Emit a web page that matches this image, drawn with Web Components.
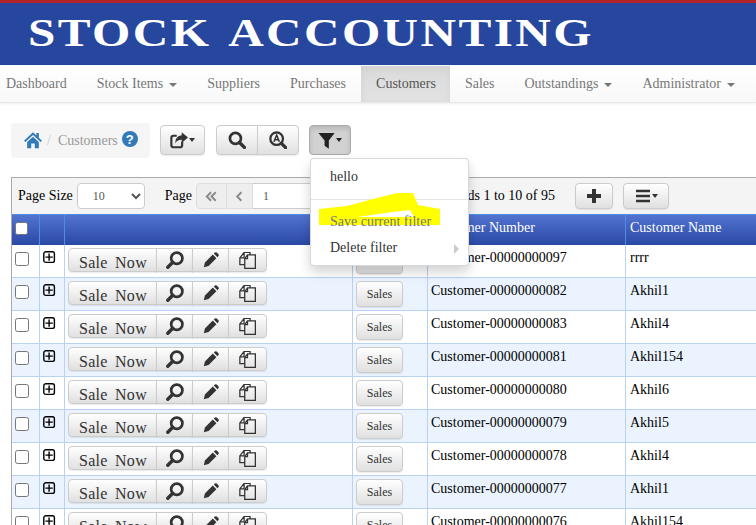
<!DOCTYPE html>
<html>
<head>
<meta charset="utf-8">
<title>Stock Accounting</title>
<style>
    html, body {
        margin: 0;
        height: 100%;
        overflow: hidden;
        background: #fff;
        font-family: "Liberation Serif", serif;
        font-size: 14px;
        color: #000;
    }
</style>
</head>
<body>
<app-header>STOCK ACCOUNTING</app-header>
<nav-bar>
    <nav-item>Dashboard</nav-item>
    <nav-item caret>Stock Items</nav-item>
    <nav-item>Suppliers</nav-item>
    <nav-item>Purchases</nav-item>
    <nav-item active>Customers</nav-item>
    <nav-item>Sales</nav-item>
    <nav-item caret>Outstandings</nav-item>
    <nav-item caret>Administrator</nav-item>
</nav-bar>
<page-tools></page-tools>
<data-grid></data-grid>

<script>
//icons, all hand drawn on a 16 box
const icons = {
    search: '<circle cx="6.6" cy="6.6" r="4.9" fill="none" stroke="currentColor" stroke-width="2.4"/><path d="M10.2 10.2L14.6 14.6" stroke="currentColor" stroke-width="3" stroke-linecap="round"/>',
    searchLeft: '<circle cx="9.6" cy="6.4" r="5" fill="none" stroke="currentColor" stroke-width="2.4"/><path d="M6 10L1.6 14.4" stroke="currentColor" stroke-width="3" stroke-linecap="round"/>',
    searchA: '<circle cx="6.8" cy="6.8" r="5.6" fill="none" stroke="currentColor" stroke-width="2"/><path d="M4.4 9.6L6.8 3.6L9.2 9.6M5.2 7.8H8.4" fill="none" stroke="currentColor" stroke-width="1.4"/><path d="M11 11L14.8 14.8" stroke="currentColor" stroke-width="3" stroke-linecap="round"/>',
    pencil: '<path d="M.8 15.2L1.9 10.4L9.8 2.6L13.4 6.2L5.6 14.1Z M10.8 1.6L11.9 .5Q12.8 -.1 13.7 .5L15.5 2.3Q16.1 3.2 15.5 4.1L14.4 5.2Z" fill="currentColor"/>',
    copy: '<path d="M5.4 6.2L8 2.8H15.4V15.4H5.4Z M8 2.8V6.2H5.4" fill="none" stroke="currentColor" stroke-width="1.2"/><path d="M10.4 2.8V.4H4.8L.8 5.6V11.8H5.4 M4.8 .4V5.6H.8" fill="none" stroke="currentColor" stroke-width="1.2"/>',
    filter: '<path d="M.4 1H15.6L10.2 8V15.8L6.2 13V8Z" fill="currentColor"/>',
    share: '<path d="M10.8 9.6V12.6Q10.8 14.4 9 14.4H3.2Q1.2 14.4 1.2 12.4V6.2Q1.2 4.2 3.2 4.2H6" fill="none" stroke="currentColor" stroke-width="1.9"/><path d="M10.4 1L16 5.8L10.4 10.6V7.8Q6.4 7.6 4.6 11Q4.6 4.6 10.4 3.8Z" fill="currentColor"/>',
    plus: '<path d="M8 1V15M1 8H15" stroke="currentColor" stroke-width="4"/>',
    bars: '<path d="M1 3H15M1 8H15M1 13H15" stroke="currentColor" stroke-width="2.4"/>',
    home: '<path d="M8 1.2L0 8.6L1.2 9.8L8 3.6L14.8 9.8L16 8.6L13.2 6V1.8H11V4Z" fill="currentColor"/><path d="M2.8 9.8L8 5L13.2 9.8V15.4H9.6V11H6.4V15.4H2.8Z" fill="currentColor"/>',
    first: '<path d="M7.5 3.5L3 8L7.5 12.5M12.5 3.5L8 8L12.5 12.5" fill="none" stroke="currentColor" stroke-width="2"/>',
    prev: '<path d="M10 3.5L5.5 8L10 12.5" fill="none" stroke="currentColor" stroke-width="2"/>',
    expand: '<rect x=".8" y=".8" width="10.6" height="10.6" rx="2" fill="none" stroke="currentColor" stroke-width="1.4"/><path d="M6.1 2.4V9.8M2.4 6.1H9.8" stroke="currentColor" stroke-width="1.4"/>'
};

function icon(name, size) {
    return `<svg width="${size}" height="${size}" viewBox="0 0 16 16" aria-hidden="true">${icons[name]}</svg>`;
}

const buttonCss = `
    .btn {
        /*position*/
        display: inline-flex;
        align-items: center;
        justify-content: center;
        box-sizing: border-box;
        height: 30px;

        /*border*/
        border: 1px solid #ccc;
        border-radius: 4px;
        background: linear-gradient(#fff, #e0e0e0);
        box-shadow: 0 1px 1px rgba(0,0,0,.08);

        /*text*/
        color: #333;
        font-family: "Liberation Serif", serif;
    }
    .group { display: inline-flex; }
    .group .btn { border-radius: 0; margin-left: -1px; }
    .group .btn:first-child { border-radius: 4px 0 0 4px; margin-left: 0; }
    .group .btn:last-child { border-radius: 0 4px 4px 0; }
    .caret {
        display: inline-block;
        width: 0;
        height: 0;
        margin-left: 1px;
        border-top: 4px solid currentColor;
        border-left: 3.5px solid transparent;
        border-right: 3.5px solid transparent;
    }
`;

class AppHeader extends HTMLElement {
    constructor() {
        super();
        this.attachShadow({mode: 'open'});
        this.shadowRoot.innerHTML = `
        <style>
            :host {
                display: block;
                box-sizing: border-box;
                height: 65px;
                padding: 4px 0 0 28px;
                background: #27479f;
                border-top: 3px solid #b4232a;
                color: #fff;
                font: bold 41px/50px "Liberation Serif", serif;
                white-space: nowrap;
            }
            /*the logo lettering is wider than the font*/
            .wide {
                display: inline-block;
                letter-spacing: 2px;
                word-spacing: 4px;
                transform: scaleX(1.2);
                transform-origin: left center;
            }
        </style>
        <span class="wide"><slot></slot></span>`;
    }
}
customElements.define('app-header', AppHeader);

class NavBar extends HTMLElement {
    constructor() {
        super();
        this.attachShadow({mode: 'open'});
        this.shadowRoot.innerHTML = `
        <style>
            :host {
                display: flex;
                box-sizing: border-box;
                height: 37px;
                margin-top: 1px;
                padding-left: 0;
                background: linear-gradient(#fff, #f8f8f8);
                border-bottom: 1px solid #e7e7e7;
                box-shadow: 0 1px 3px rgba(0,0,0,.08);
            }
            .inner { display: flex; margin-left: -9px; }
        </style>
        <div class="inner"><slot></slot></div>`;
    }
}
customElements.define('nav-bar', NavBar);

class NavItem extends HTMLElement {
    constructor() {
        super();
        this.attachShadow({mode: 'open'});
        const caret = this.hasAttribute('caret') ? '<span class="caret"></span>' : '';
        this.shadowRoot.innerHTML = `
        <style>
            :host {
                display: flex;
                align-items: center;
                padding: 0 15px;
                color: #777;
                font-size: 14px;
                white-space: nowrap;
            }
            :host([active]) {
                padding-right: 14px;
                color: #555;
                background: linear-gradient(#dbdbdb, #e2e2e2);
                box-shadow: inset 0 3px 9px rgba(0,0,0,.05);
            }
            .caret {
                margin-left: 6px;
                margin-top: 2px;
                border-top: 4px solid #777;
                border-left: 4px solid transparent;
                border-right: 4px solid transparent;
            }
        </style>
        <slot></slot>${caret}`;
    }
}
customElements.define('nav-item', NavItem);

const toolsTemplate = document.createElement('template');
toolsTemplate.innerHTML = `
<style>
    ${buttonCss}
    :host {
        display: flex;
        align-items: flex-start;
        position: relative;
        height: 35px;
        margin: 20px 0 19px 11px;
    }
    .crumb {
        display: flex;
        align-items: center;
        box-sizing: border-box;
        width: 139px;
        height: 35px;
        padding-left: 13px;
        margin-right: 10px;
        background: #f5f5f5;
        border-radius: 4px;
        color: #999;
    }
    .crumb svg { color: #337ab7; margin-top: -2px; }
    .sep { color: #ccc; margin: 0 7px 0 5px; }
    .help {
        display: inline-flex;
        align-items: center;
        justify-content: center;
        width: 16px;
        height: 16px;
        margin: -3px 0 0 4px;
        border-radius: 50%;
        background: #337ab7;
        color: #fff;
        font: bold 13px "Liberation Sans", sans-serif;
    }
    .btns { display: flex; margin-top: 2px; }
    .share { width: 45px; margin-right: 11px; }
    .find { width: 42px; }
    .active {
        width: 42px;
        margin-left: 10px;
        background: #d2d2d2;
        border-color: #aaa;
        box-shadow: inset 0 3px 5px rgba(0,0,0,.125);
        color: #222;
    }
</style>
<div class="crumb">${icon('home', 18)}<span class="sep">/</span><span>Customers</span><span class="help">?</span></div>
<div class="btns">
    <span class="btn share">${icon('share', 18)}<span class="caret"></span></span>
    <span class="group">
        <span class="btn find">${icon('search', 18)}</span>
        <span class="btn find">${icon('searchA', 18)}</span>
    </span>
    <span class="btn active">${icon('filter', 17)}<span class="caret"></span></span>
</div>
<filter-menu></filter-menu>`;

class PageTools extends HTMLElement {
    constructor() {
        super();
        this.attachShadow({mode: 'open'});
        this.shadowRoot.appendChild(toolsTemplate.content.cloneNode(true));
    }
}

class FilterMenu extends HTMLElement {
    constructor() {
        super();
        this.attachShadow({mode: 'open'});
        this.shadowRoot.innerHTML = `
        <style>
            :host {
                /*over the grid, hangs from the filter button*/
                position: absolute;
                left: 299px;
                top: 35px;
                z-index: 10;
                display: block;
                box-sizing: border-box;
                width: 159px;
                height: 108px;
                padding: 5px 0;
                background: #fff;
                border: 1px solid rgba(0,0,0,.15);
                border-radius: 4px;
                box-shadow: 0 6px 12px rgba(0,0,0,.175);
                font-size: 14px;
                color: #333;
            }
            .item {
                position: relative;
                height: 26px;
                line-height: 26px;
                padding-left: 19px;
            }
            .divider { height: 1px; margin: 9px 0; background: #e5e5e5; }
            .off { color: #777; }
            .mark { position: absolute; left: -1px; top: -1px; }
            .arrow {
                position: absolute;
                right: 9px;
                top: 9px;
                border-left: 5px solid #ccc;
                border-top: 5px solid transparent;
                border-bottom: 5px solid transparent;
            }
        </style>
        <div class="item">hello</div>
        <div class="divider"></div>
        <svg class="mark" width="159" height="108" viewBox="310 158 159 108">
            <path fill-rule="evenodd" fill="#ffff00" d="M319 209L347 206L373 199L397 193L413 193L418 205L440 209V225H319Z M357 217L393 212L410 210L414 217Z"/>
        </svg>
        <div class="item off">Save current filter</div>
        <div class="item">Delete filter<span class="arrow"></span></div>`;
    }
}
customElements.define('filter-menu', FilterMenu);
customElements.define('page-tools', PageTools);

const gridTemplate = document.createElement('template');
gridTemplate.innerHTML = `
<style>
    ${buttonCss}
    :host {
        display: block;
        margin-left: 11px;
        border-top: 1px solid #aaa;
        border-left: 1px solid #aaa;
    }
    .bar {
        display: flex;
        align-items: center;
        box-sizing: border-box;
        height: 36px;
        padding: 0 87px 0 6px;
        background: #f4f4f4;
        font-size: 14px;
    }
    select {
        box-sizing: border-box;
        width: 68px;
        height: 26px;
        margin: 0 20px 0 4px;
        padding: 0 0 0 11px;
        background: #fff;
        border: 1px solid #ccc;
        border-radius: 4px;
        color: #555;
        font: 12px "Liberation Serif", serif;
    }
    .pager { display: flex; height: 26px; margin-left: 4px; }
    .pager span {
        display: flex;
        align-items: center;
        justify-content: center;
        box-sizing: border-box;
        background: #eee;
        border: 1px solid #ddd;
        color: #888;
    }
    .pager span:first-child { width: 31px; border-radius: 4px 0 0 4px; }
    .pager span:nth-child(2) { width: 26px; border-left: 0; }
    .pager input {
        box-sizing: border-box;
        width: 100px;
        padding: 0 0 0 10px;
        border: 1px solid #ccc;
        border-left: 0;
        outline: 0;
        color: #555;
        font: 12px "Liberation Serif", serif;
    }
    .records { margin-left: auto; margin-right: 20px; }
    .bar .btn { height: 26px; }
    .add { width: 38px; margin-right: 10px; }
    .list { width: 46px; }
    .head {
        display: grid;
        grid-template-columns: 28px 25px 288px 75px 198px 1fr;
        box-sizing: border-box;
        height: 31px;
        background: linear-gradient(#5273d0, #2a49a5);
        border-top: 1px solid #4a8fe0;
        color: #fff;
        font-size: 14px;
    }
    .head div {
        box-sizing: border-box;
        padding: 5px 3px;
        border-right: 1px solid #4a8fe0;
        white-space: nowrap;
    }
    .head div:last-child { border-right: 0; padding-left: 4px; }
    .head input {
        appearance: none;
        display: block;
        box-sizing: border-box;
        margin: 2px 0 0 0;
        width: 13px;
        height: 13px;
        background: #fff;
        border: 1px solid #767676;
        border-radius: 2.5px;
    }
</style>
<div class="bar">
    <span>Page Size</span>
    <select><option>10</option></select>
    <span>Page</span>
    <div class="pager">
        <span>${icon('first', 15)}</span>
        <span>${icon('prev', 15)}</span>
        <input value="1">
    </div>
    <span class="records">Records 1 to 10 of 95</span>
    <span class="btn add">${icon('plus', 16)}</span>
    <span class="btn list">${icon('bars', 16)}<span class="caret"></span></span>
</div>
<div class="head">
    <div><input type="checkbox"></div>
    <div></div>
    <div></div>
    <div></div>
    <div>Customer Number</div>
    <div>Customer Name</div>
</div>
<div class="rows"></div>`;

const customers = [
    ['97', 'rrrr'],
    ['82', 'Akhil1'],
    ['83', 'Akhil4'],
    ['81', 'Akhil154'],
    ['80', 'Akhil6'],
    ['79', 'Akhil5'],
    ['78', 'Akhil4'],
    ['77', 'Akhil1'],
    ['76', 'Akhil154']
];

class DataGrid extends HTMLElement {
    constructor() {
        super();
        this.attachShadow({mode: 'open'});
        this.shadowRoot.appendChild(gridTemplate.content.cloneNode(true));
        const rows = this.shadowRoot.querySelector('.rows');
        customers.forEach((c, i) => {
            const row = document.createElement('grid-row');
            row.setAttribute('number', 'Customer-000000000' + c[0]);
            row.setAttribute('name', c[1]);
            if (i % 2) row.setAttribute('alt', '');
            rows.appendChild(row);
        });
    }
}

const rowTemplate = document.createElement('template');
rowTemplate.innerHTML = `
<style>
    ${buttonCss}
    :host {
        display: grid;
        grid-template-columns: 28px 25px 288px 75px 198px 1fr;
        height: 33px;
        box-sizing: border-box;
        background: #fff;
        border-bottom: 1px solid #b9d1f2;
        font-size: 14px;
    }
    :host([alt]) { background: #eaf3fe; }
    .cell {
        box-sizing: border-box;
        padding: 3px;
        border-right: 1px solid #b9d1f2;
        white-space: nowrap;
    }
    .cell:last-child { border-right: 0; padding-left: 4px; }
    .cell input {
        appearance: none;
        display: block;
        box-sizing: border-box;
        margin: 4px 0 0 0;
        width: 14px;
        height: 14px;
        background: #fff;
        border: 1px solid #767676;
        border-radius: 2.5px;
    }
    .expand { padding: 6px 0 0 3px; color: #000; }
    .expand svg { display: block; }
    .actions { padding: 3px 0 0 3px; }
    .actions .btn { height: 24px; width: 37px; color: #333; }
    .actions .btn:first-child { width: 89px; padding: 5px 0 0 1px; font-size: 16px; word-spacing: 3px; letter-spacing: .3px; }
    .actions .btn:last-child { width: 39px; }
    .sales { padding: 3px 0 0 3px; }
    .sales .btn { width: 47px; height: 26px; font-size: 12px; }
    .text { padding-top: 5px; }
</style>
<div class="cell"><input type="checkbox"></div>
<div class="cell expand">${icon('expand', 16)}</div>
<div class="cell actions"><span class="group">
    <span class="btn">Sale Now</span>
    <span class="btn">${icon('searchLeft', 18)}</span>
    <span class="btn">${icon('pencil', 16)}</span>
    <span class="btn">${icon('copy', 17)}</span>
</span></div>
<div class="cell sales"><span class="btn">Sales</span></div>
<div class="cell text number"></div>
<div class="cell text name"></div>`;

class GridRow extends HTMLElement {
    constructor() {
        super();
        this.attachShadow({mode: 'open'});
        this.shadowRoot.appendChild(rowTemplate.content.cloneNode(true));
    }
    connectedCallback() {
        this.shadowRoot.querySelector('.number').textContent = this.getAttribute('number');
        this.shadowRoot.querySelector('.name').textContent = this.getAttribute('name');
    }
}

customElements.define('grid-row', GridRow);
customElements.define('data-grid', DataGrid);
</script>
</body>
</html>
